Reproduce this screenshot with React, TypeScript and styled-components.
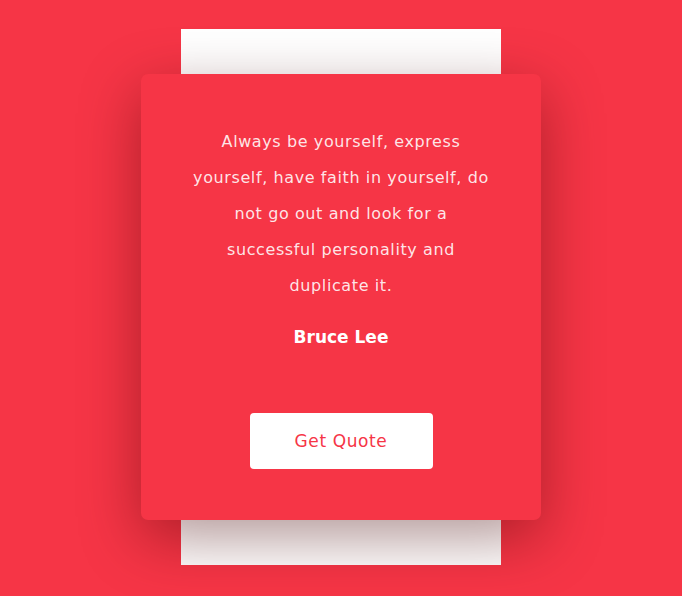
import React from "react";
import styled, { createGlobalStyle } from "styled-components";

const Global = createGlobalStyle`
  html, body { margin: 0; padding: 0; }
  body {
    background: #f63546;
    font-family: "DejaVu Sans", "Noto Sans", sans-serif;
  }
`;

const Page = styled.div`
  min-height: 100vh;
  box-sizing: border-box;
  padding-bottom: 2px;
  display: grid;
  place-items: center;
`;

const Stack = styled.div`
  display: grid;
  place-items: center;
  & > * { grid-area: 1 / 1; }
`;

const Paper = styled.div`
  width: 320px;
  height: 536px;
  background: #ffffff;
`;

const Card = styled.div`
  width: 400px;
  height: 446px;
  box-sizing: border-box;
  background: #f63546;
  border-radius: 7px;
  box-shadow: 0 18px 60px rgba(70, 0, 0, 0.42);
  padding: 50px 30px 51px;
  display: flex;
  flex-direction: column;
  align-items: center;
  text-align: center;
`;

const Quote = styled.p`
  margin: 0;
  font-size: 16px;
  letter-spacing: 0.6px;
  line-height: 36px;
  color: rgba(255, 255, 255, 0.88);
  white-space: nowrap;
`;

const Author = styled.h3`
  margin: 20px 0 0;
  font-size: 17px;
  line-height: 27px;
  font-weight: 700;
  color: #ffffff;
`;

const Button = styled.button`
  margin-top: auto;
  width: 183px;
  height: 56px;
  border: none;
  border-radius: 4px;
  background: #ffffff;
  color: #f63546;
  font-family: inherit;
  font-size: 17px;
  letter-spacing: 0.6px;
  cursor: pointer;
`;

export default function App() {
  return (
    <>
      <Global />
      <Page>
        <Stack>
          <Paper />
          <Card>
            <Quote>
              Always be yourself, express
              <br />
              yourself, have faith in yourself, do
              <br />
              not go out and look for a
              <br />
              successful personality and
              <br />
              duplicate it.
            </Quote>
            <Author>Bruce Lee</Author>
            <Button>Get Quote</Button>
          </Card>
        </Stack>
      </Page>
    </>
  );
}
